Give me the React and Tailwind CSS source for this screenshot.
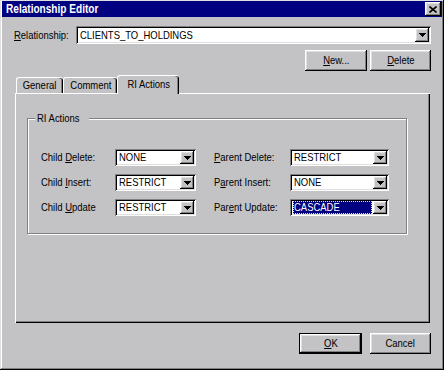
import React from "react";

const raised =
  "shadow-[inset_-1px_-1px_0_0_#000,inset_1px_1px_0_0_#fff,inset_-2px_-2px_0_0_#808080,inset_2px_2px_0_0_#dfdfdf]";
const sunken =
  "shadow-[inset_1px_1px_0_0_#808080,inset_-1px_-1px_0_0_#fff,inset_2px_2px_0_0_#000,inset_-2px_-2px_0_0_#dfdfdf]";

// the dialog font is narrower than Arial, so squeeze the text a bit
function T({ children, center }) {
  return (
    <span
      className={`inline-block whitespace-nowrap scale-x-[0.86] ${
        center ? "origin-center" : "origin-left"
      }`}
    >
      {children}
    </span>
  );
}

function Arrow() {
  return (
    <svg width="7" height="4" viewBox="0 0 7 4" className="block">
      <rect x="0" y="0" width="7" height="1" fill="#000" />
      <rect x="1" y="1" width="5" height="1" fill="#000" />
      <rect x="2" y="2" width="3" height="1" fill="#000" />
      <rect x="3" y="3" width="1" height="1" fill="#000" />
    </svg>
  );
}

function Combo({ value, className, selected }) {
  return (
    <div className={`flex items-stretch bg-white p-[2px] ${sunken} ${className}`}>
      <div className="flex-1 flex items-center pl-[1px] pr-[1px]">
        {selected ? (
          <span className="flex-1 h-full flex items-center bg-[#000080] text-white pl-[1px] outline outline-1 outline-dotted outline-[#ffff00] -outline-offset-1">
            <T>{value}</T>
          </span>
        ) : (
          <span className="pl-[1px]">
            <T>{value}</T>
          </span>
        )}
      </div>
      <div className={`w-[14px] flex items-center justify-center bg-[#c3c2c5] ${raised}`}>
        <Arrow />
      </div>
    </div>
  );
}

function Button({ children, className, def }) {
  return (
    <div
      className={`flex items-center justify-center bg-[#c3c2c5] ${
        def ? "border border-black" : ""
      } ${className}`}
    >
      <div className={`w-full h-full flex items-center justify-center ${raised}`}>
        <T center>{children}</T>
      </div>
    </div>
  );
}

const rows = [
  [
    <>Child <u>D</u>elete:</>,
    "NONE",
    <><u>P</u>arent Delete:</>,
    "RESTRICT",
  ],
  [
    <>Child <u>I</u>nsert:</>,
    "RESTRICT",
    <>P<u>a</u>rent Insert:</>,
    "NONE",
  ],
  [
    <>Child <u>U</u>pdate</>,
    "RESTRICT",
    <>Par<u>e</u>nt Update:</>,
    "CASCADE",
  ],
];

export default function App() {
  return (
    <div
      className={`w-[444px] h-[370px] bg-[#c3c2c5] px-[2px] pt-[1px] flex flex-col text-[11px] text-black font-['Liberation_Sans',Arial,sans-serif] shadow-[inset_-1px_-1px_0_0_#000,inset_1px_1px_0_0_#dfdfdf,inset_-2px_-2px_0_0_#808080,inset_2px_2px_0_0_#fff]`}
    >
      <div className="h-[16px] bg-[#000080] flex items-center pl-[4px] pr-[1px]">
        <span className="inline-block origin-left scale-x-[0.84] whitespace-nowrap font-bold text-white text-[12px]">
          Relationship Editor
        </span>
        <div className={`ml-auto w-[16px] h-[14px] bg-[#c3c2c5] flex items-center justify-center ${raised}`}>
          <svg width="8" height="7" viewBox="0 0 8 7" className="block">
            <path d="M0.5 0.5L7.5 6.5M7.5 0.5L0.5 6.5" stroke="#000" strokeWidth="1.6" />
          </svg>
        </div>
      </div>

      <div className="mt-[9px] ml-[12px] mr-[11px] flex items-center h-[18px]">
        <span className="w-[62px]">
          <T>
            <u>R</u>elationship:
          </T>
        </span>
        <Combo value="CLIENTS_TO_HOLDINGS" className="flex-1 h-[18px]" />
      </div>

      <div className="mt-[6px] mr-[11px] flex justify-end gap-[3px]">
        <Button className="w-[62px] h-[21px]">
          <u>N</u>ew...
        </Button>
        <Button className="w-[61px] h-[21px]">
          <u>D</u>elete
        </Button>
      </div>

      <div className="mt-[4px] ml-[13px] mr-[12px] flex flex-col">
        <div className="h-[18px] flex items-end pl-[1px]">
          <div className="w-[47px] h-[16px] flex items-center justify-center rounded-t-[3px] border-t border-l border-white shadow-[inset_-1px_0_0_0_#000,inset_-2px_0_0_0_#808080]">
            <T center>General</T>
          </div>
          <div className="w-[54px] h-[16px] flex items-center justify-center rounded-t-[3px] border-t border-l border-white shadow-[inset_-1px_0_0_0_#000,inset_-2px_0_0_0_#808080]">
            <T center>Comment</T>
          </div>
          <div className="relative z-10 -mb-px w-[62px] h-[19px] bg-[#c3c2c5] flex items-center justify-center pb-[2px] rounded-t-[3px] border-t border-l border-white shadow-[inset_-1px_0_0_0_#000,inset_-2px_0_0_0_#808080]">
            <T center>RI Actions</T>
          </div>
        </div>
        <div className="h-[230px] pl-[12px] pt-[25px] shadow-[inset_1px_1px_0_0_#fff,inset_-1px_-1px_0_0_#000,inset_-2px_-2px_0_0_#808080]">
          <div className="relative w-[380px] h-[116px] border border-[#808080] shadow-[inset_1px_1px_0_0_#fff,1px_1px_0_0_#fff] pl-[13px] pt-[30px]">
            <span className="absolute -top-[7px] left-[7px] px-[2px] bg-[#c3c2c5] leading-[12px]">
              <T>RI Actions</T>
            </span>
            <div className="flex flex-col gap-[8px]">
              {rows.map((r, i) => (
                <div key={i} className="flex items-center h-[17px]">
                  <span className="w-[74px]">
                    <T>{r[0]}</T>
                  </span>
                  <Combo value={r[1]} className="w-[81px] h-[17px]" />
                  <span className="ml-[18px] w-[76px]">
                    <T>{r[2]}</T>
                  </span>
                  <Combo value={r[3]} selected={i === 2} className="w-[99px] h-[17px]" />
                </div>
              ))}
            </div>
          </div>
        </div>
      </div>

      <div className="mt-[10px] mr-[11px] flex justify-end gap-[8px]">
        <Button def className="w-[63px] h-[21px]">
          <u>O</u>K
        </Button>
        <Button className="w-[61px] h-[21px]">Cancel</Button>
      </div>
    </div>
  );
}
